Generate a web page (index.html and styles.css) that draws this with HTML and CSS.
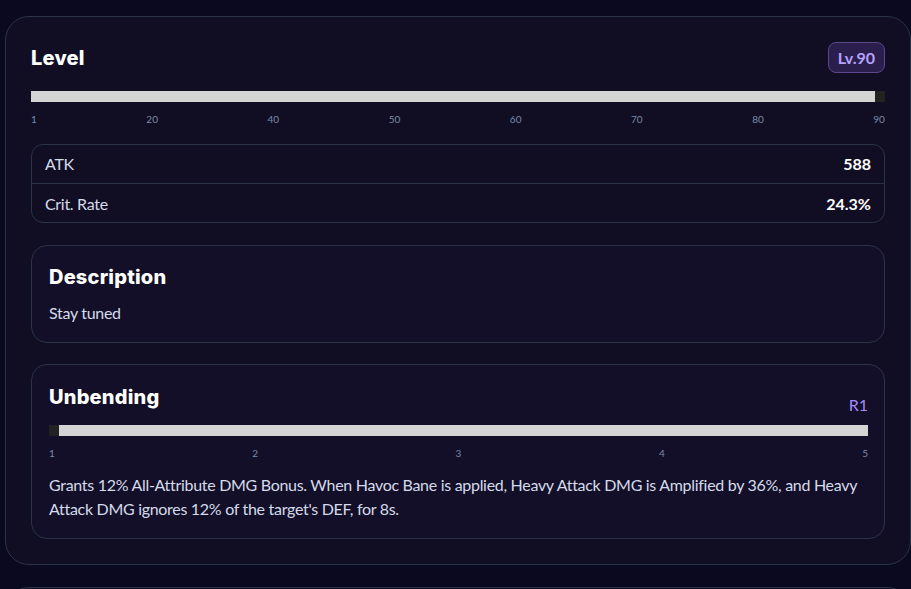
FILE: index.html
```html
<!DOCTYPE html>
<html lang="en">
<head>
<meta charset="utf-8">
<title>Weapon detail</title>
<link rel="stylesheet" href="styles.css">
</head>
<body>
<main class="page">
  <section class="panel">
    <header class="panel-head">
      <h2 class="heading">Level</h2>
      <span class="badge">Lv.90</span>
    </header>

    <div class="slider">
      <div class="track"></div>
      <div class="thumb"></div>
    </div>
    <div class="ticks">
      <span>1</span><span>20</span><span>40</span><span>50</span><span>60</span><span>70</span><span>80</span><span>90</span>
    </div>

    <div class="stats">
      <div class="stat-row">
        <span class="stat-name">ATK</span>
        <span class="stat-value">588</span>
      </div>
      <div class="stat-row">
        <span class="stat-name">Crit. Rate</span>
        <span class="stat-value">24.3%</span>
      </div>
    </div>

    <div class="block">
      <h3 class="heading">Description</h3>
      <p class="block-text desc-text">Stay tuned</p>
    </div>

    <div class="block">
      <div class="block-head">
        <h3 class="heading">Unbending</h3>
        <span class="rank">R1</span>
      </div>
      <div class="slider">
        <div class="thumb"></div>
        <div class="track"></div>
      </div>
      <div class="ticks">
        <span>1</span><span>2</span><span>3</span><span>4</span><span>5</span>
      </div>
      <p class="block-text passive-text">Grants 12% All-Attribute DMG Bonus. When Havoc Bane is applied, Heavy Attack DMG is Amplified by 36%, and Heavy Attack DMG ignores 12% of the target's DEF, for 8s.</p>
    </div>
  </section>

  <section class="panel panel-next"></section>
</main>
</body>
</html>
```

FILE: styles.css
```css
* {
  box-sizing: border-box;
}

html,
body {
  margin: 0;
  background: #0b0920;
}

body {
  font-family: Lato, "Noto Sans", sans-serif;
  color: #d5dbea;
  font-size: 16px;
  line-height: 24px;
  letter-spacing: -0.3px;
  overflow: hidden;
}

.page {
  padding: 16px 0 0 5px;
  display: flex;
  flex-direction: column;
  gap: 22px;
}

.panel {
  background: #110e23;
  border: 1px solid #2b3346;
  border-radius: 24px;
  padding: 25px;
  display: flex;
  flex-direction: column;
}

.panel-next {
  min-height: 200px;
}

.panel-head {
  display: flex;
  justify-content: space-between;
  align-items: center;
  height: 31px;
}

.panel-head .heading {
  margin-top: 1px;
}

.heading {
  margin: 0;
  font-family: Inter, Roboto, sans-serif;
  font-size: 20px;
  line-height: 28px;
  font-weight: 800;
  color: #ffffff;
  letter-spacing: 0.2px;
}

.badge {
  height: 31px;
  padding: 0 9px;
  border: 1px solid #5b4690;
  border-radius: 8px;
  background: #2a1f4c;
  color: #b7a2ff;
  font-weight: 700;
  font-size: 16px;
  line-height: 29px;
  letter-spacing: 0;
}

/* range bar: light track with a square dark handle */
.slider {
  display: flex;
  height: 11px;
  margin-top: 18px;
}

.track {
  flex: 1;
  background: #d4d4d4;
}

.thumb {
  width: 10px;
  background: #222222;
}

.ticks {
  display: flex;
  justify-content: space-between;
  margin-top: 11px;
  font-size: 10px;
  line-height: 12px;
  letter-spacing: 0;
  color: #7a8aa8;
}

.stats {
  margin-top: 19px;
  border: 1px solid #2b3346;
  border-radius: 12px;
}

.stat-row {
  display: flex;
  justify-content: space-between;
  padding: 7px 13px;
  font-size: 16px;
  line-height: 24px;
}

.stat-row + .stat-row {
  border-top: 1px solid #2b3346;
  padding-top: 8px;
  padding-bottom: 6px;
}

.stat-value {
  font-weight: 700;
  color: #ffffff;
  letter-spacing: 0;
}

.block {
  margin-top: 22px;
  border: 1px solid #2b3346;
  border-radius: 16px;
  background: #130f28;
  padding: 17px 16px 17px 17px;
}

.block + .block {
  margin-top: 21px;
  padding-bottom: 16px;
}

.block-head {
  display: flex;
  justify-content: space-between;
  align-items: flex-end;
}

.block-head .heading {
  margin-top: 1px;
}

.block-head + .slider {
  margin-top: 14px;
}

.rank {
  color: #a78bfa;
  font-size: 16px;
  line-height: 24px;
  letter-spacing: 0;
  margin-bottom: -6px;
}

.block-text {
  margin: 0;
  font-size: 16px;
  line-height: 24px;
}

.desc-text {
  margin-top: 10px;
}

.passive-text {
  margin-top: 14px;
  margin-bottom: 1px;
}
```
